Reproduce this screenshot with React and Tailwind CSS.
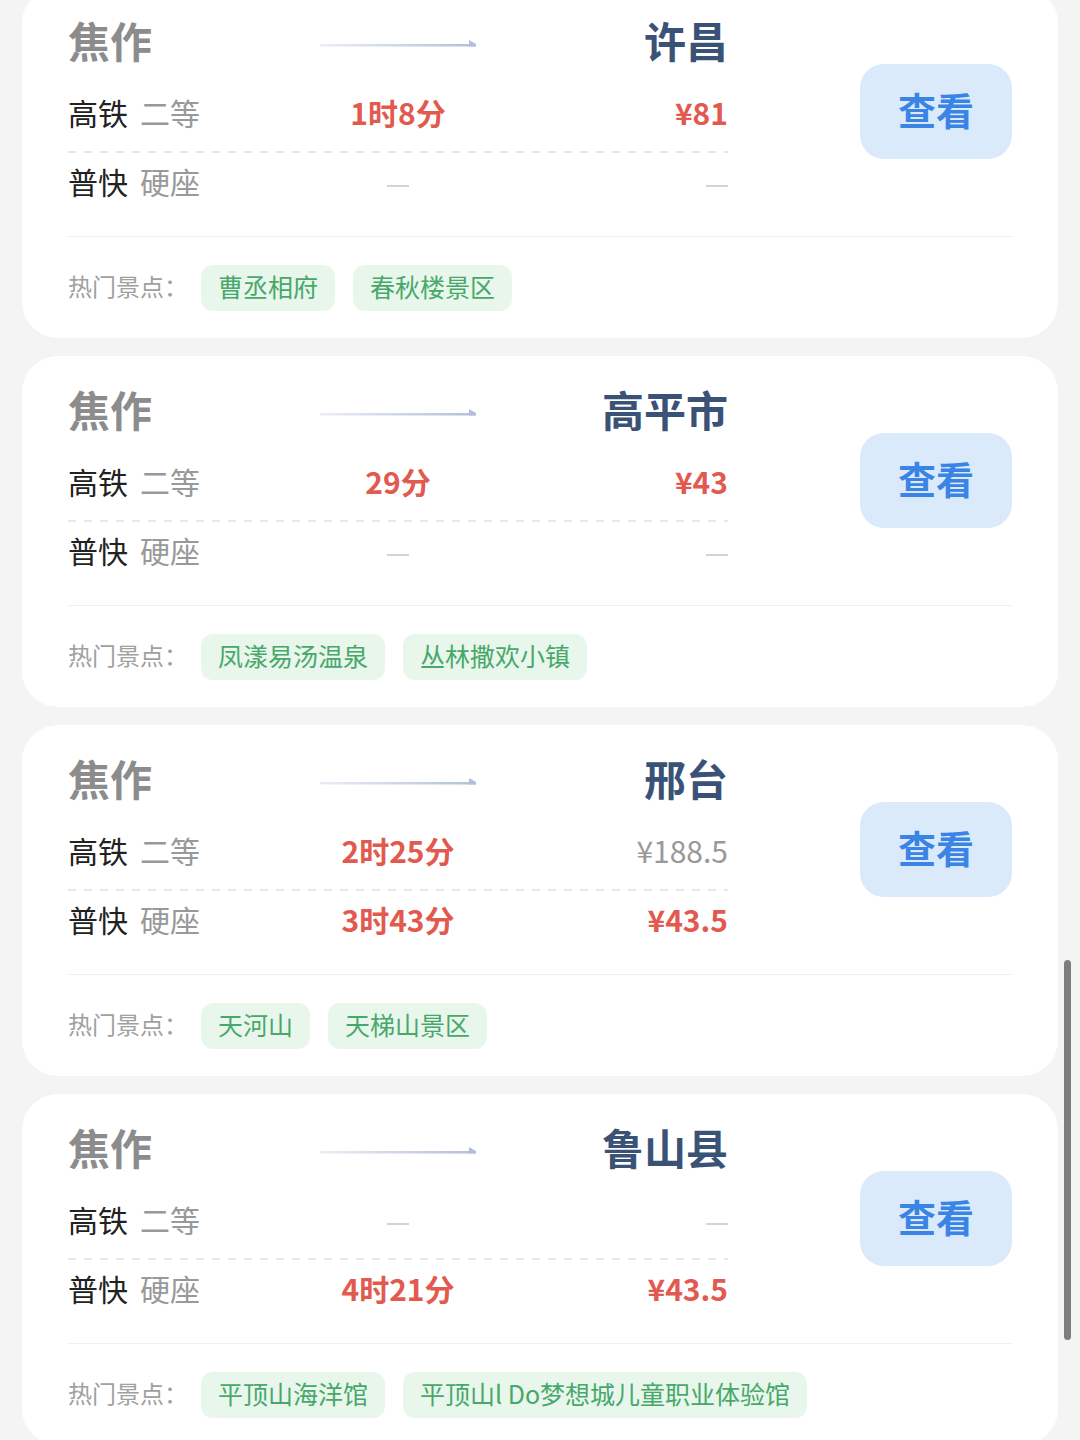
import React from "react";

const FONT = { fontFamily: '"Noto Sans CJK SC", "Noto Sans", sans-serif' };

const cards = [
  {
    to: "许昌",
    rows: [
      { a: "高铁", b: "二等", t: "1时8分", p: "¥81", pr: "red" },
      { a: "普快", b: "硬座", t: null, p: null },
    ],
    tags: ["曹丞相府", "春秋楼景区"],
  },
  {
    to: "高平市",
    rows: [
      { a: "高铁", b: "二等", t: "29分", p: "¥43", pr: "red" },
      { a: "普快", b: "硬座", t: null, p: null },
    ],
    tags: ["凤漾易汤温泉", "丛林撒欢小镇"],
  },
  {
    to: "邢台",
    rows: [
      { a: "高铁", b: "二等", t: "2时25分", p: "¥188.5", pr: "gray" },
      { a: "普快", b: "硬座", t: "3时43分", p: "¥43.5", pr: "red" },
    ],
    tags: ["天河山", "天梯山景区"],
  },
  {
    to: "鲁山县",
    rows: [
      { a: "高铁", b: "二等", t: null, p: null },
      { a: "普快", b: "硬座", t: "4时21分", p: "¥43.5", pr: "red" },
    ],
    tags: ["平顶山海洋馆", "平顶山l Do梦想城儿童职业体验馆"],
  },
];

function Dash() {
  return <span className="inline-block w-[22px] h-[2px] bg-[#d4d4d4] align-middle" />;
}

function Arrow() {
  return (
    <svg width="160" height="14" viewBox="0 0 160 14">
      <defs>
        <linearGradient id="ag" x1="0" x2="1" y1="0" y2="0">
          <stop offset="0" stopColor="#e9edf5" />
          <stop offset="1" stopColor="#b3bfd8" />
        </linearGradient>
      </defs>
      <rect x="2" y="8" width="156" height="2.5" fill="url(#ag)" />
      <polygon points="151,4 158,8 158,10.5 151,10.5" fill="#b3bfd8" />
    </svg>
  );
}

function Row({ r, h }) {
  return (
    <div className={`grid grid-cols-3 items-center ${h}`}>
      <div className="flex items-center gap-[12px] text-[30px] leading-none">
        <span className="text-[#222222]">{r.a}</span>
        <span className="text-[#999999]">{r.b}</span>
      </div>
      <div className="text-center text-[30px] leading-none font-bold text-[#e25a4f]">
        {r.t ? r.t : <Dash />}
      </div>
      <div
        className={`text-right text-[30px] leading-none ${
          r.p
            ? r.pr === "red"
              ? "font-bold text-[#e25a4f]"
              : "text-[#999999]"
            : ""
        }`}
      >
        {r.p ? r.p : <Dash />}
      </div>
    </div>
  );
}

function Card({ c, first }) {
  return (
    <div
      className={`bg-white rounded-[36px] px-[46px] pt-[20px] pb-[27px] ${
        first ? "-mt-[13px]" : ""
      }`}
    >
      <div className="flex items-start justify-between">
        <div className="w-[660px]">
          <div className="grid grid-cols-3 items-center h-[72px] pb-[6px]">
            <div className="text-[42px] leading-none font-bold text-[#8c8c8c]">焦作</div>
            <div className="flex justify-center pt-[6px]">
              <Arrow />
            </div>
            <div className="text-right text-[42px] leading-none font-bold text-[#3b5277]">
              {c.to}
            </div>
          </div>
          <Row r={c.rows[0]} h="h-[72px] pb-[6px]" />
          <div className="h-[2px] bg-[repeating-linear-gradient(90deg,#e8e8e8_0_8px,transparent_8px_16px)]" />
          <Row r={c.rows[1]} h="h-[64px] pb-[8px]" />
        </div>
        <div className="mt-[57px] w-[152px] h-[95px] pb-[5px] rounded-[24px] bg-[#dbeafb] flex items-center justify-center text-[38px] font-bold text-[#3a84e6] leading-none">
          查看
        </div>
      </div>
      <div className="mt-[19px] h-px bg-[#f0f0f0]" />
      <div className="mt-[28px] flex items-center h-[46px]">
        <span className="text-[24px] text-[#a0a0a0] leading-none pb-[4px]">热门景点：</span>
        <div className="ml-[13px] flex gap-[18px]">
          {c.tags.map((t) => (
            <span
              key={t}
              className="h-[46px] px-[17px] pb-[3px] rounded-[12px] bg-[#e8f6ec] text-[#47a86a] text-[25px] leading-none flex items-center"
            >
              {t}
            </span>
          ))}
        </div>
      </div>
    </div>
  );
}

export default function App() {
  return (
    <div
      className="relative w-[1080px] h-[1440px] overflow-hidden bg-[#f4f4f4]"
      style={FONT}
    >
      <div className="px-[22px] flex flex-col gap-[18px]">
        {cards.map((c, i) => (
          <Card key={i} c={c} first={i === 0} />
        ))}
      </div>
      <div className="absolute left-[1064px] top-[960px] w-[7px] h-[380px] rounded-full bg-[#7d7d7d]" />
    </div>
  );
}
